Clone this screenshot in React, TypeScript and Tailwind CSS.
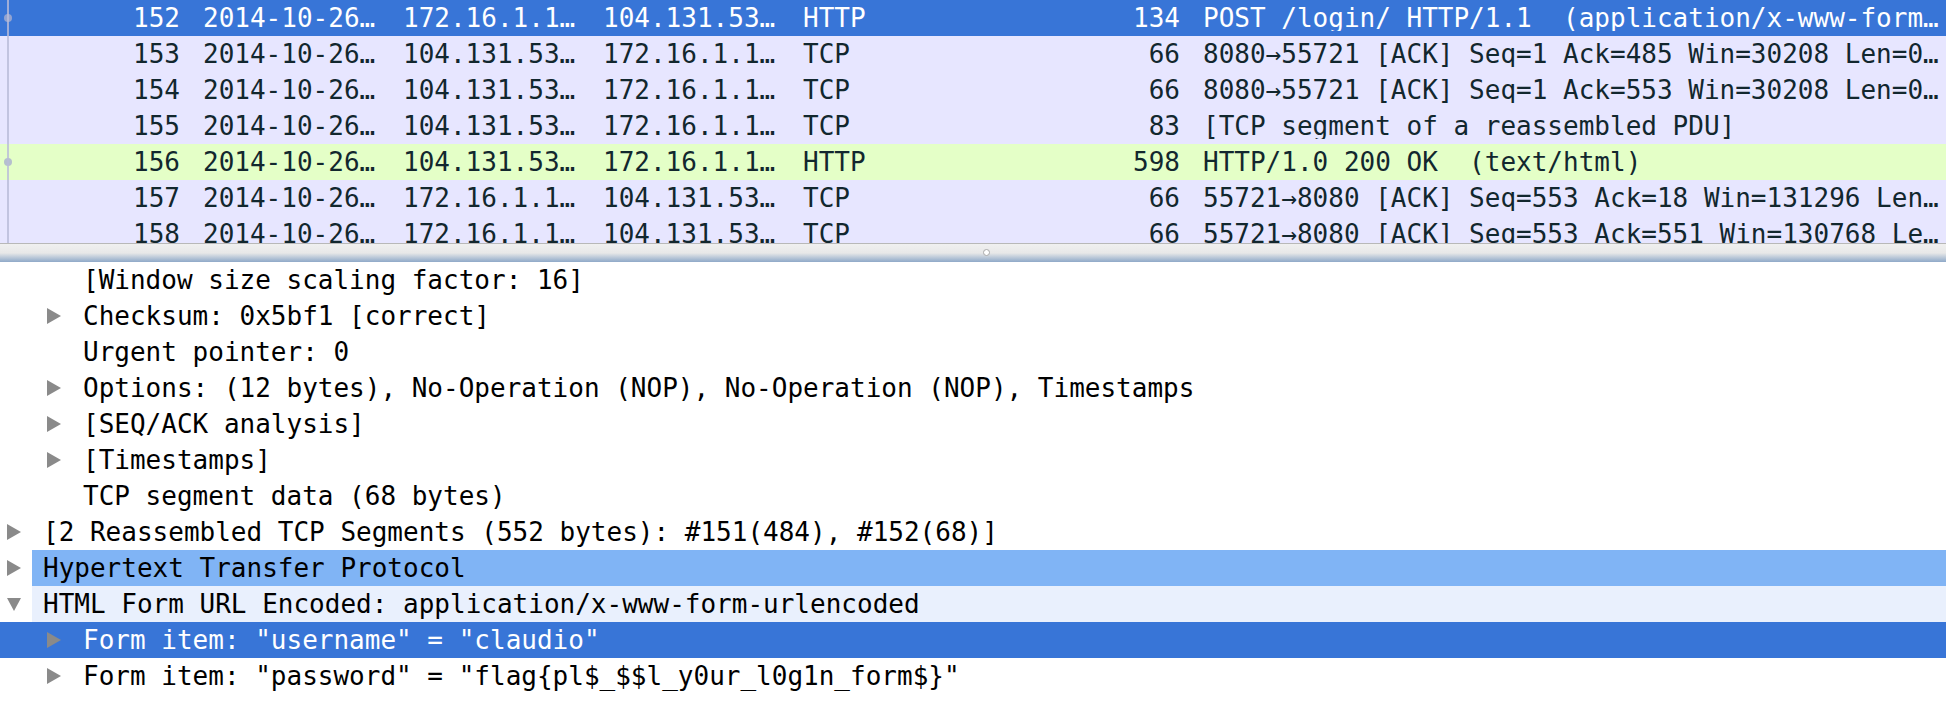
import React from "react";

type Packet = {
  no: number;
  time: string;
  src: string;
  dst: string;
  proto: string;
  len: number;
  info: string;
  kind: "sel" | "tcp" | "http";
  dot?: boolean;
};

const packets: Packet[] = [
  { no: 152, time: "2014-10-26…", src: "172.16.1.1…", dst: "104.131.53…", proto: "HTTP", len: 134, info: "POST /login/ HTTP/1.1  (application/x-www-form…", kind: "sel", dot: true },
  { no: 153, time: "2014-10-26…", src: "104.131.53…", dst: "172.16.1.1…", proto: "TCP", len: 66, info: "8080→55721 [ACK] Seq=1 Ack=485 Win=30208 Len=0…", kind: "tcp" },
  { no: 154, time: "2014-10-26…", src: "104.131.53…", dst: "172.16.1.1…", proto: "TCP", len: 66, info: "8080→55721 [ACK] Seq=1 Ack=553 Win=30208 Len=0…", kind: "tcp" },
  { no: 155, time: "2014-10-26…", src: "104.131.53…", dst: "172.16.1.1…", proto: "TCP", len: 83, info: "[TCP segment of a reassembled PDU]", kind: "tcp" },
  { no: 156, time: "2014-10-26…", src: "104.131.53…", dst: "172.16.1.1…", proto: "HTTP", len: 598, info: "HTTP/1.0 200 OK  (text/html)", kind: "http", dot: true },
  { no: 157, time: "2014-10-26…", src: "172.16.1.1…", dst: "104.131.53…", proto: "TCP", len: 66, info: "55721→8080 [ACK] Seq=553 Ack=18 Win=131296 Len…", kind: "tcp" },
  { no: 158, time: "2014-10-26…", src: "172.16.1.1…", dst: "104.131.53…", proto: "TCP", len: 66, info: "55721→8080 [ACK] Seq=553 Ack=551 Win=130768 Le…", kind: "tcp" },
];

type Node = {
  level: number;
  arrow?: "right" | "down";
  text: string;
  bg?: "sel" | "hl" | "hl2";
};

const tree: Node[] = [
  { level: 1, text: "[Window size scaling factor: 16]" },
  { level: 1, arrow: "right", text: "Checksum: 0x5bf1 [correct]" },
  { level: 1, text: "Urgent pointer: 0" },
  { level: 1, arrow: "right", text: "Options: (12 bytes), No-Operation (NOP), No-Operation (NOP), Timestamps" },
  { level: 1, arrow: "right", text: "[SEQ/ACK analysis]" },
  { level: 1, arrow: "right", text: "[Timestamps]" },
  { level: 1, text: "TCP segment data (68 bytes)" },
  { level: 0, arrow: "right", text: "[2 Reassembled TCP Segments (552 bytes): #151(484), #152(68)]" },
  { level: 0, arrow: "right", text: "Hypertext Transfer Protocol", bg: "hl" },
  { level: 0, arrow: "down", text: "HTML Form URL Encoded: application/x-www-form-urlencoded", bg: "hl2" },
  { level: 1, arrow: "right", text: 'Form item: "username" = "claudio"', bg: "sel" },
  { level: 1, arrow: "right", text: 'Form item: "password" = "flag{pl$_$$l_y0ur_l0g1n_form$}"' },
];

const rowBg = {
  sel: "bg-[#3875d7] text-white",
  tcp: "bg-[#e7e6ff] text-[#12272e]",
  http: "bg-[#e4ffc7] text-[#12272e]",
};

function Arrow({ dir }: { dir: "right" | "down" }) {
  return dir === "right" ? (
    <svg width="14" height="16" viewBox="0 0 14 16">
      <polygon points="0,0 14,8 0,16" fill="#8a8a8a" />
    </svg>
  ) : (
    <svg width="14" height="14" viewBox="0 0 14 14">
      <polygon points="0,1 14,1 7,14" fill="#8a8a8a" />
    </svg>
  );
}

function PacketRow({ p }: { p: Packet }) {
  return (
    <div className={`relative flex h-[36px] shrink-0 items-center whitespace-pre ${rowBg[p.kind]}`}>
      {p.dot && (
        <span className="absolute left-[4px] top-[14px] h-[8px] w-[8px] rounded-full bg-[#a9afd0] opacity-80" />
      )}
      <div className="w-[200px] pr-[20px] text-right">{p.no}</div>
      <div className="w-[200px] pl-[3px]">{p.time}</div>
      <div className="w-[200px] pl-[3px]">{p.src}</div>
      <div className="w-[200px] pl-[3px]">{p.dst}</div>
      <div className="w-[200px] pl-[3px]">{p.proto}</div>
      <div className="w-[200px] pr-[20px] text-right">{p.len}</div>
      <div className="flex-1 overflow-hidden pl-[3px]">{p.info}</div>
    </div>
  );
}

function TreeRow({ n }: { n: Node }) {
  const indent = n.level * 40;
  const bg =
    n.bg === "sel"
      ? "bg-[#3875d7] text-white"
      : n.bg === "hl"
        ? "bg-[#80b4f5]"
        : n.bg === "hl2"
          ? "bg-[#e9f0fd]"
          : "";
  return (
    <div className={`relative flex h-[36px] shrink-0 items-center whitespace-pre text-black ${n.bg === "sel" ? bg : ""}`}>
      {n.arrow && (
        <span className="absolute top-1/2 -translate-y-1/2" style={{ left: indent + 7 }}>
          <Arrow dir={n.arrow} />
        </span>
      )}
      <div className="flex h-full flex-1 items-center" style={{ marginLeft: indent + 32 }}>
        <div className={`flex h-full flex-1 items-center pl-[11px] ${n.bg && n.bg !== "sel" ? bg : ""}`}>
          {n.text}
        </div>
      </div>
    </div>
  );
}

export default function App() {
  return (
    <div className="flex h-[702px] w-[1946px] flex-col overflow-hidden bg-white font-['DejaVu_Sans_Mono',monospace] text-[26px] leading-none">
      {/* packet list */}
      <div className="relative flex h-[243px] shrink-0 flex-col overflow-hidden">
        {packets.map((p) => (
          <PacketRow key={p.no} p={p} />
        ))}
        <span className="absolute bottom-0 left-[7px] top-0 w-[2px] bg-[#b9bcd8] opacity-80" />
      </div>

      {/* splitter */}
      <div className="relative h-[19px] shrink-0 border-t border-[#b8b8b8] bg-gradient-to-b from-[#f0f0f0] via-[#e8e8e8] to-[#8fa9c8]">
        <span className="absolute left-[983px] top-[5px] h-[7px] w-[7px] rounded-full border border-[#a8a8a8] bg-white" />
      </div>

      {/* packet details */}
      <div className="flex flex-1 flex-col">
        {tree.map((n, i) => (
          <TreeRow key={i} n={n} />
        ))}
      </div>
    </div>
  );
}
